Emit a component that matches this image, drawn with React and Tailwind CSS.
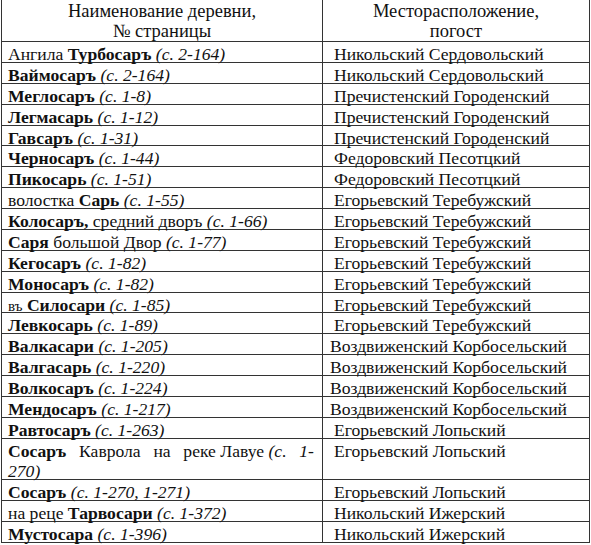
import React from 'react'

const ROWS = [
  { left: <>Ангила <b>Турбосаръ</b> <i>(с. 2-164)</i></>, right: 'Никольский Сердовольский' },
  { left: <><b>Ваймосаръ</b> <i>(с. 2-164)</i></>, right: 'Никольский Сердовольский' },
  { left: <><b>Меглосаръ</b> <i>(с. 1-8)</i></>, right: 'Пречистенский Городенский' },
  { left: <><b>Легмасарь</b> <i>(с. 1-12)</i></>, right: 'Пречистенский Городенский' },
  { left: <><b>Гавсаръ</b> <i>(с. 1-31)</i></>, right: 'Пречистенский Городенский' },
  { left: <><b>Черносаръ</b> <i>(с. 1-44)</i></>, right: 'Федоровский Песотцкий' },
  { left: <><b>Пикосарь</b> <i>(с. 1-51)</i></>, right: 'Федоровский Песотцкий' },
  { left: <>волостка <b>Сарь</b> <i>(с. 1-55)</i></>, right: 'Егорьевский Теребужский' },
  { left: <><b>Колосаръ,</b> средний дворъ <i>(с. 1-66)</i></>, right: 'Егорьевский Теребужский' },
  { left: <><b>Саря</b> большой Двор <i>(с. 1-77)</i></>, right: 'Егорьевский Теребужский' },
  { left: <><b>Кегосаръ</b> <i>(с. 1-82)</i></>, right: 'Егорьевский Теребужский' },
  { left: <><b>Моносаръ</b> <i>(с. 1-82)</i></>, right: 'Егорьевский Теребужский' },
  { left: <><span className="text-[15px]">въ</span> <b>Силосари</b> <i>(с. 1-85)</i></>, right: 'Егорьевский Теребужский' },
  { left: <><b>Левкосарь</b> <i>(с. 1-89)</i></>, right: 'Егорьевский Теребужский' },
  { left: <><b>Валкасари</b> <i>(с. 1-205)</i></>, right: 'Воздвиженский Корбосельский', tight: true },
  { left: <><b>Валгасарь</b> <i>(с. 1-220)</i></>, right: 'Воздвиженский Корбосельский', tight: true },
  { left: <><b>Волкосаръ</b> <i>(с. 1-224)</i></>, right: 'Воздвиженский Корбосельский', tight: true },
  { left: <><b>Мендосаръ</b> <i>(с. 1-217)</i></>, right: 'Воздвиженский Корбосельский', tight: true },
  { left: <><b>Равтосаръ</b> <i>(с. 1-263)</i></>, right: 'Егорьевский Лопьский' },
  { double: true, right: 'Егорьевский Лопьский' },
  { left: <><b>Сосаръ</b> <i>(с. 1-270, 1-271)</i></>, right: 'Егорьевский Лопьский' },
  { left: <>на реце <b>Тарвосари</b> <i>(с. 1-372)</i></>, right: 'Никольский Ижерский' },
  { left: <><b>Мустосара</b> <i>(с. 1-396)</i></>, right: 'Никольский Ижерский' },
]

function Row({ row }) {
  if (row.double) {
    return (
      <div className="flex h-[41.75px] border-b border-[#333]">
        <div className="w-[321px] shrink-0 border-r border-[#333] pl-[6px] pr-[8px] pt-[2px] leading-[20px]">
          <div className="flex justify-between">
            <b>Сосаръ</b>
            <span>Каврола</span>
            <span>на</span>
            <span>реке Лавуе <i>(с.</i></span>
            <i>1-</i>
          </div>
          <div><i>270)</i></div>
        </div>
        <div className="pl-[11px] pt-[2px] leading-[20px]">{row.right}</div>
      </div>
    )
  }
  return (
    <div className="flex h-[20.875px] border-b border-[#333] leading-[20px]">
      <div className="w-[321px] shrink-0 border-r border-[#333] pl-[6px] pt-[2px] whitespace-nowrap">{row.left}</div>
      <div className={`${row.tight ? 'pl-[7px]' : 'pl-[11px]'} pt-[2px] whitespace-nowrap`}>{row.right}</div>
    </div>
  )
}

export default function App() {
  return (
    <div className="w-[591px] h-[545px] overflow-hidden bg-white text-[#111] text-[17.6px] font-['Liberation_Serif',serif]">
      <div className="ml-px w-[589px] border-x border-[#333]">
        <div className="flex h-[42px] border-b border-[#333] leading-[20px] text-center text-[18.5px]">
          <div className="w-[321px] shrink-0 border-r border-[#333] pt-px">
            Наименование деревни,<br />№ страницы
          </div>
          <div className="flex-1 pt-px">
            Месторасположение,<br />погост
          </div>
        </div>
        {ROWS.map((row, i) => <Row key={i} row={row} />)}
      </div>
    </div>
  )
}
